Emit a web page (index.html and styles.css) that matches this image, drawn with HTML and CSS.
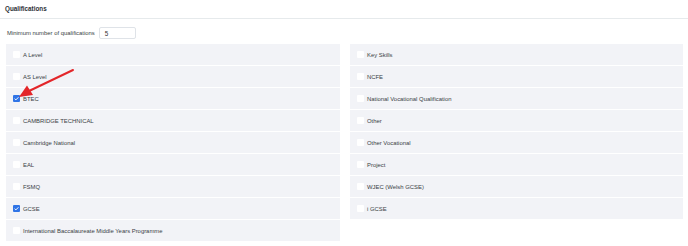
FILE: index.html
```html
<!DOCTYPE html>
<html>
<head>
<meta charset="utf-8">
<link rel="stylesheet" href="styles.css">
</head>
<body>
<div class="page">
  <div class="header">Qualifications</div>
  <div class="min-row">
    <span class="min-label">Minimum number of qualifications</span>
    <div class="min-input">5</div>
  </div>
  <div class="grid">
    <div class="col">
      <div class="row"><span class="cb"></span><span>A Level</span></div>
      <div class="row"><span class="cb"></span><span>AS Level</span></div>
      <div class="row"><span class="cb checked"><svg viewBox="0 0 8 8"><path d="M1.8 4.2 L3.3 5.6 L6.2 2.6" fill="none" stroke="#fff" stroke-width="1.1"/></svg></span><span>BTEC</span></div>
      <div class="row"><span class="cb"></span><span>CAMBRIDGE TECHNICAL</span></div>
      <div class="row"><span class="cb"></span><span>Cambridge National</span></div>
      <div class="row"><span class="cb"></span><span>EAL</span></div>
      <div class="row"><span class="cb"></span><span>FSMQ</span></div>
      <div class="row"><span class="cb checked"><svg viewBox="0 0 8 8"><path d="M1.8 4.2 L3.3 5.6 L6.2 2.6" fill="none" stroke="#fff" stroke-width="1.1"/></svg></span><span>GCSE</span></div>
      <div class="row"><span class="cb"></span><span>International Baccalaureate Middle Years Programme</span></div>
    </div>
    <div class="col">
      <div class="row"><span class="cb"></span><span>Key Skills</span></div>
      <div class="row"><span class="cb"></span><span>NCFE</span></div>
      <div class="row"><span class="cb"></span><span>National Vocational Qualification</span></div>
      <div class="row"><span class="cb"></span><span>Other</span></div>
      <div class="row"><span class="cb"></span><span>Other Vocational</span></div>
      <div class="row"><span class="cb"></span><span>Project</span></div>
      <div class="row"><span class="cb"></span><span>WJEC (Welsh GCSE)</span></div>
      <div class="row"><span class="cb"></span><span>i GCSE</span></div>
    </div>
  </div>
  <svg class="arrow" width="90" height="110" viewBox="0 0 90 110">
    <line x1="73" y1="70" x2="28" y2="91.5" stroke="#e3262a" stroke-width="2" stroke-linecap="round"/>
    <polygon points="19,97 27,85.5 33,95" fill="#e3262a"/>
  </svg>
</div>
</body>
</html>
```
FILE: styles.css
```css
html, body {
  margin: 0;
  padding: 0;
  background: #ffffff;
}
.page {
  position: relative;
  width: 688px;
  height: 246px;
  font-family: "Liberation Sans", Arial, sans-serif;
  color: #3a3f45;
  font-size: 6px;
  overflow: hidden;
}
.header {
  height: 19px;
  box-sizing: border-box;
  padding: 5px 0 0 5px;
  font-weight: bold;
  font-size: 6.3px;
  color: #2c3036;
  border-bottom: 1px solid #e6eaec;
}
.min-row {
  display: flex;
  align-items: center;
  gap: 4px;
  padding: 8px 0 0 7px;
  height: 12px;
}
.min-label {
  font-size: 5.9px;
}
.min-input {
  width: 37px;
  height: 12px;
  box-sizing: border-box;
  border: 1px solid #dfe3e8;
  border-radius: 2px;
  padding-left: 5px;
  display: flex;
  align-items: center;
  font-size: 6.3px;
  color: #333;
}
.grid {
  display: grid;
  grid-template-columns: 334px 333px;
  column-gap: 10px;
  padding: 5px 0 0 6px;
  align-items: start;
}
.col {
  display: flex;
  flex-direction: column;
  gap: 1px;
}
.row {
  height: 21px;
  background: #f2f3f7;
  display: flex;
  align-items: center;
  padding-left: 7px;
  gap: 3px;
  font-size: 5.9px;
}
.cb {
  width: 7px;
  height: 7px;
  background: #ffffff;
  border-radius: 1px;
  display: flex;
}
.cb.checked {
  background: #2f74e6;
}
.cb svg {
  width: 7px;
  height: 7px;
}
.arrow {
  position: absolute;
  left: 0;
  top: 0;
}
```
